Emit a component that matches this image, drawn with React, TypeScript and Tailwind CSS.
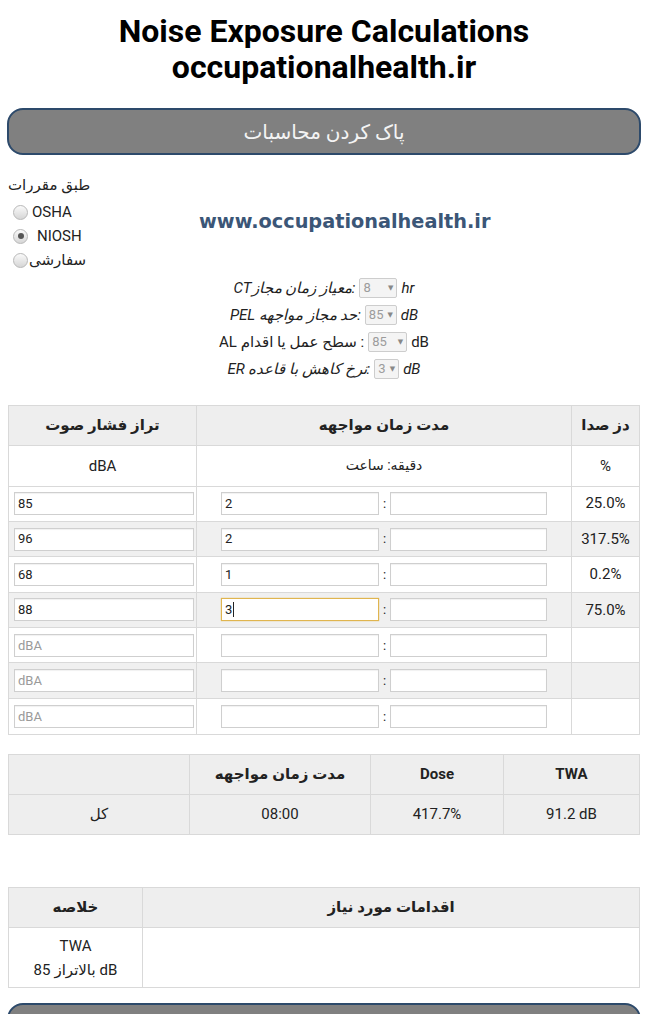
import React from "react";

function Radio({ checked }: { checked?: boolean }) {
  return (
    <span className="inline-flex w-[15px] h-[15px] shrink-0 items-center justify-center rounded-full border border-[#b8b8b8] bg-linear-to-b from-[#fafafa] to-[#d6d6d6]">
      {checked && <span className="w-[6px] h-[6px] rounded-full bg-[#555]" />}
    </span>
  );
}

function Sel({ v, w }: { v: string; w: string }) {
  return (
    <span
      className={`mx-[4px] inline-flex h-[20px] ${w} items-center justify-between rounded-[2px] border border-[#cdcdcd] bg-[#f4f4f4] px-[3px] text-[13px] not-italic text-[#9c9c9c]`}
    >
      <span>{v}</span>
      <span className="text-[7px] text-[#888]">▼</span>
    </span>
  );
}

function Box({
  v,
  ph,
  focus,
  w,
}: {
  v?: string;
  ph?: string;
  focus?: boolean;
  w: string;
}) {
  return (
    <div
      className={`flex h-[23px] ${w} items-center border bg-white px-[3px] text-[13px] ${
        focus
          ? "border-[#e0b54f] shadow-[0_0_1px_#e0b54f]"
          : "border-[#cfcfcf] shadow-[inset_0_1px_1px_rgba(0,0,0,0.06)]"
      }`}
    >
      {v ? (
        <span className="text-[#222]">{v}</span>
      ) : ph ? (
        <span className="text-[#9a9a9a]">{ph}</span>
      ) : null}
      {focus && <span className="ml-[1px] h-[15px] w-[1px] bg-[#222]" />}
    </div>
  );
}

const rows = [
  { db: "85", h: "2", dose: "25.0%" },
  { db: "96", h: "2", dose: "317.5%" },
  { db: "68", h: "1", dose: "0.2%" },
  { db: "88", h: "3", dose: "75.0%", focus: true },
  {},
  {},
  {},
] as { db?: string; h?: string; dose?: string; focus?: boolean }[];

export default function App() {
  return (
    <div className="min-h-screen bg-white font-['Roboto','DejaVu_Sans',sans-serif] text-[#222]">
      <h1 className="pt-[13px] text-center text-[32px] font-bold leading-[36px] text-black">
        Noise Exposure Calculations
        <br />
        occupationalhealth.ir
      </h1>

      <div
        dir="rtl"
        className="mx-[7px] mt-[23px] flex h-[47px] items-center justify-center rounded-[16px] border-2 border-[#2d4a6b] bg-[#808080] text-[20px] text-[#f4f4f4]"
      >
        پاک کردن محاسبات
      </div>

      <div className="mt-[20px] flex items-start">
        <div className="w-[100px] pl-[8px] text-[15px]">
          <div dir="rtl" className="flex h-[20px] w-fit items-center">
            طبق مقررات
          </div>
          <div className="mt-[5px] flex h-[24px] items-center pl-[5px]">
            <Radio />
            <span className="ml-[4px]">OSHA</span>
          </div>
          <div className="flex h-[24px] items-center pl-[5px]">
            <Radio checked />
            <span className="ml-[9px]">NIOSH</span>
          </div>
          <div className="flex h-[24px] items-center pl-[5px]">
            <Radio />
            <span dir="rtl" className="ml-[1px]">
              سفارشی
            </span>
          </div>
        </div>
        <div className="ml-[99px] mt-[35px] font-['DejaVu_Sans',sans-serif] text-[19.3px] font-bold leading-[24px] text-[#3b5677]">
          www.occupationalhealth.ir
        </div>
      </div>

      <div className="mt-[2.5px] flex flex-col items-center text-[15px]">
        <div className="flex h-[27px] items-center italic">
          <span dir="rtl">:معیاز زمان مجازCT</span>
          <Sel v="8" w="w-[38px]" />
          <span>hr</span>
        </div>
        <div className="flex h-[27px] items-center italic">
          <span dir="rtl">:حد مجاز مواجهه PEL</span>
          <Sel v="85" w="w-[32px]" />
          <span>dB</span>
        </div>
        <div className="flex h-[27px] items-center">
          <span dir="rtl">: سطح عمل یا اقدام AL</span>
          <Sel v="85" w="w-[39px]" />
          <span>dB</span>
        </div>
        <div className="flex h-[27px] items-center italic">
          <span dir="rtl">:نرخ کاهش با قاعده ER</span>
          <Sel v="3" w="w-[25px]" />
          <span>dB</span>
        </div>
      </div>

      {/* main table */}
      <div className="mx-[8px] mt-[22.5px] border border-[#d9d9d9] text-[15px]">
        <div className="flex h-[40px] border-b border-[#d9d9d9] bg-[#eeeeee] font-bold">
          <div dir="rtl" className="flex w-[188px] items-center justify-center border-r border-[#d9d9d9]">
            تراز فشار صوت
          </div>
          <div dir="rtl" className="flex w-[375px] items-center justify-center border-r border-[#d9d9d9]">
            مدت زمان مواجهه
          </div>
          <div dir="rtl" className="flex flex-1 items-center justify-center">
            دز صدا
          </div>
        </div>
        <div className="flex h-[40.5px] border-b border-[#d9d9d9] bg-white">
          <div className="flex w-[188px] items-center justify-center border-r border-[#d9d9d9]">
            dBA
          </div>
          <div dir="rtl" className="flex w-[375px] items-center justify-center border-r border-[#d9d9d9] text-[14px]">
            دقیقه: ساعت
          </div>
          <div className="flex flex-1 items-center justify-center">%</div>
        </div>
        {rows.map((r, i) => (
          <div
            key={i}
            className={`flex h-[35.4px] ${i < 6 ? "border-b border-[#d9d9d9]" : ""} ${
              i % 2 === 1 ? "bg-[#f0f0f0]" : "bg-white"
            }`}
          >
            <div className="flex w-[188px] items-center border-r border-[#d9d9d9] pl-[5px]">
              <Box v={r.db} ph={r.db ? undefined : "dBA"} w="w-[180px]" />
            </div>
            <div className="flex w-[375px] items-center justify-center border-r border-[#d9d9d9]">
              <Box v={r.h} focus={r.focus} w="w-[158px]" />
              <span className="w-[11px] text-center text-[13px]">:</span>
              <Box w="w-[157px]" />
            </div>
            <div className="flex flex-1 items-center justify-center">{r.dose}</div>
          </div>
        ))}
      </div>

      {/* summary table */}
      <div className="mx-[8px] mt-[19px] border border-[#d9d9d9] bg-[#eeeeee] text-[15px]">
        <div className="flex h-[40px] border-b border-[#d9d9d9] font-bold">
          <div className="w-[181px] border-r border-[#d9d9d9]" />
          <div dir="rtl" className="flex w-[181px] items-center justify-center border-r border-[#d9d9d9]">
            مدت زمان مواجهه
          </div>
          <div className="flex w-[133px] items-center justify-center border-r border-[#d9d9d9]">
            Dose
          </div>
          <div className="flex flex-1 items-center justify-center">TWA</div>
        </div>
        <div className="flex h-[39px]">
          <div dir="rtl" className="flex w-[181px] items-center justify-center border-r border-[#d9d9d9]">
            کل
          </div>
          <div className="flex w-[181px] items-center justify-center border-r border-[#d9d9d9]">
            08:00
          </div>
          <div className="flex w-[133px] items-center justify-center border-r border-[#d9d9d9]">
            417.7%
          </div>
          <div className="flex flex-1 items-center justify-center">91.2 dB</div>
        </div>
      </div>

      {/* actions table */}
      <div className="mx-[8px] mt-[52px] border border-[#d9d9d9] text-[15px]">
        <div className="flex h-[40px] border-b border-[#d9d9d9] bg-[#eeeeee] font-bold">
          <div dir="rtl" className="flex w-[134px] items-center justify-center border-r border-[#d9d9d9]">
            خلاصه
          </div>
          <div dir="rtl" className="flex flex-1 items-center justify-center">
            اقدامات مورد نیاز
          </div>
        </div>
        <div className="flex h-[59px] bg-white">
          <div className="flex w-[134px] flex-col items-center justify-center border-r border-[#d9d9d9] leading-[24px]">
            <span>TWA</span>
            <span className="flex gap-[4px]">
              <span>85</span>
              <span dir="rtl">بالاتراز</span>
              <span>dB</span>
            </span>
          </div>
          <div className="flex-1" />
        </div>
      </div>

      <div className="mx-[7px] mt-[15px] h-[47px] rounded-[16px] border-2 border-[#2d4a6b] bg-[#808080]" />
    </div>
  );
}
